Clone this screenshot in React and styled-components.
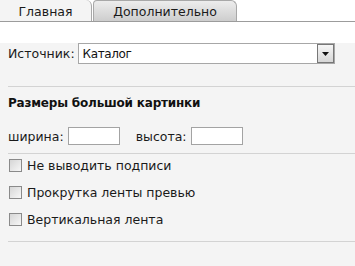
import React from 'react';
import styled, { createGlobalStyle } from 'styled-components';

const GlobalStyle = createGlobalStyle`
  body {
    margin: 0;
    background: #ffffff;
    font-family: "DejaVu Sans", Verdana, sans-serif;
    font-size: 12px;
    color: #111;
  }
`;

const Wrapper = styled.div`
  width: 355px;
  height: 266px;
  overflow: hidden;
`;

const TabBar = styled.div`
  display: flex;
  align-items: flex-end;
  height: 21px;
  border-bottom: 1px solid #9c9c9c;
`;

const Tab = styled.div`
  box-sizing: border-box;
  width: ${({ $width }) => $width}px;
  height: 21px;
  margin-left: ${({ $offset }) => $offset || 0}px;
  display: flex;
  align-items: center;
  justify-content: center;
  font-size: 12.5px;
  color: #1a1a1a;
  border-top-right-radius: 6px;
  background: ${({ $active }) =>
    $active ? '#f4f4f4' : 'linear-gradient(#ededed, #cdcdcd)'};
  border-right: 1px solid #a8a8a8;
  border-top: ${({ $active }) => ($active ? 'none' : '1px solid #a8a8a8')};
  border-left: ${({ $active }) => ($active ? 'none' : '1px solid #a8a8a8')};
  border-top-left-radius: ${({ $active }) => ($active ? 0 : 4)}px;
  padding-top: 1px;
`;

const Panel = styled.div`
  background: #f4f4f4;
  border-bottom: 1px solid #9c9c9c;
  padding-left: 8px;
  height: 238px;
  box-sizing: border-box;
`;

const Row = styled.div`
  display: flex;
  align-items: center;
  gap: ${({ $gap }) => $gap || 4}px;
  margin-top: ${({ $top }) => $top || 0}px;
  height: ${({ $height }) => $height || 20}px;
`;

const Label = styled.span`
  font-size: 12.5px;
  color: #1a1a1a;
  margin-left: ${({ $left }) => $left || 0}px;
`;

const Select = styled.div`
  box-sizing: border-box;
  width: 257px;
  height: 21px;
  background: #fff;
  border: 1px solid #a7a7a7;
  display: flex;
  align-items: center;
  justify-content: space-between;
  padding-left: 4px;
  font-family: "DejaVu Sans", Tahoma, sans-serif;
  font-size: 12px;
  letter-spacing: -0.4px;
`;

const ArrowButton = styled.div`
  box-sizing: border-box;
  width: 17px;
  height: 19px;
  border: 1px solid #777;
  background: linear-gradient(#f6f6f6, #d6d6d6);
  display: flex;
  align-items: center;
  justify-content: center;
`;

const Divider = styled.div`
  height: 1px;
  background: #d3d3d3;
  margin-top: ${({ $top }) => $top}px;
`;

const Heading = styled.div`
  font-weight: bold;
  font-size: 12px;
  letter-spacing: -0.2px;
  margin-top: 9px;
  line-height: 15px;
`;

const TextInput = styled.div`
  box-sizing: border-box;
  width: 52px;
  height: 18px;
  background: #fff;
  border: 1px solid #a3a3a3;
`;

const CheckRow = styled.label`
  display: flex;
  align-items: center;
  gap: 5px;
  height: 16px;
  margin-top: ${({ $top }) => $top}px;
  font-size: 12.5px;
  color: #1a1a1a;
`;

const CheckBox = styled.span`
  box-sizing: border-box;
  width: 13px;
  height: 13px;
  margin-left: 1px;
  border: 1px solid #8a8a8a;
  background: linear-gradient(135deg, #d6d6d6, #f7f7f7);
`;

const checks = ['Не выводить подписи', 'Прокрутка ленты превью', 'Вертикальная лента'];

export default function App() {
  return (
    <Wrapper>
      <GlobalStyle />
      <TabBar>
        <Tab $active $width={92}>Главная</Tab>
        <Tab $width={144} $offset={1}>Дополнительно</Tab>
      </TabBar>
      <Panel>
        <Row $top={21} $height={21} $gap={3}>
          <Label>Источник:</Label>
          <Select>
            Каталог
            <ArrowButton>
              <svg width="7" height="4" viewBox="0 0 7 4">
                <path d="M0 0h7L3.5 4z" fill="#111" />
              </svg>
            </ArrowButton>
          </Select>
        </Row>
        <Divider $top={22} />
        <Heading>Размеры большой картинки</Heading>
        <Row $top={16} $height={18}>
          <Label>ширина:</Label>
          <TextInput />
          <Label $left={12}>высота:</Label>
          <TextInput />
        </Row>
        <Divider $top={8} />
        {checks.map((c, i) => (
          <CheckRow key={c} $top={i === 0 ? 3 : 11}>
            <CheckBox />
            {c}
          </CheckRow>
        ))}
        <Divider $top={14} />
      </Panel>
    </Wrapper>
  );
}
